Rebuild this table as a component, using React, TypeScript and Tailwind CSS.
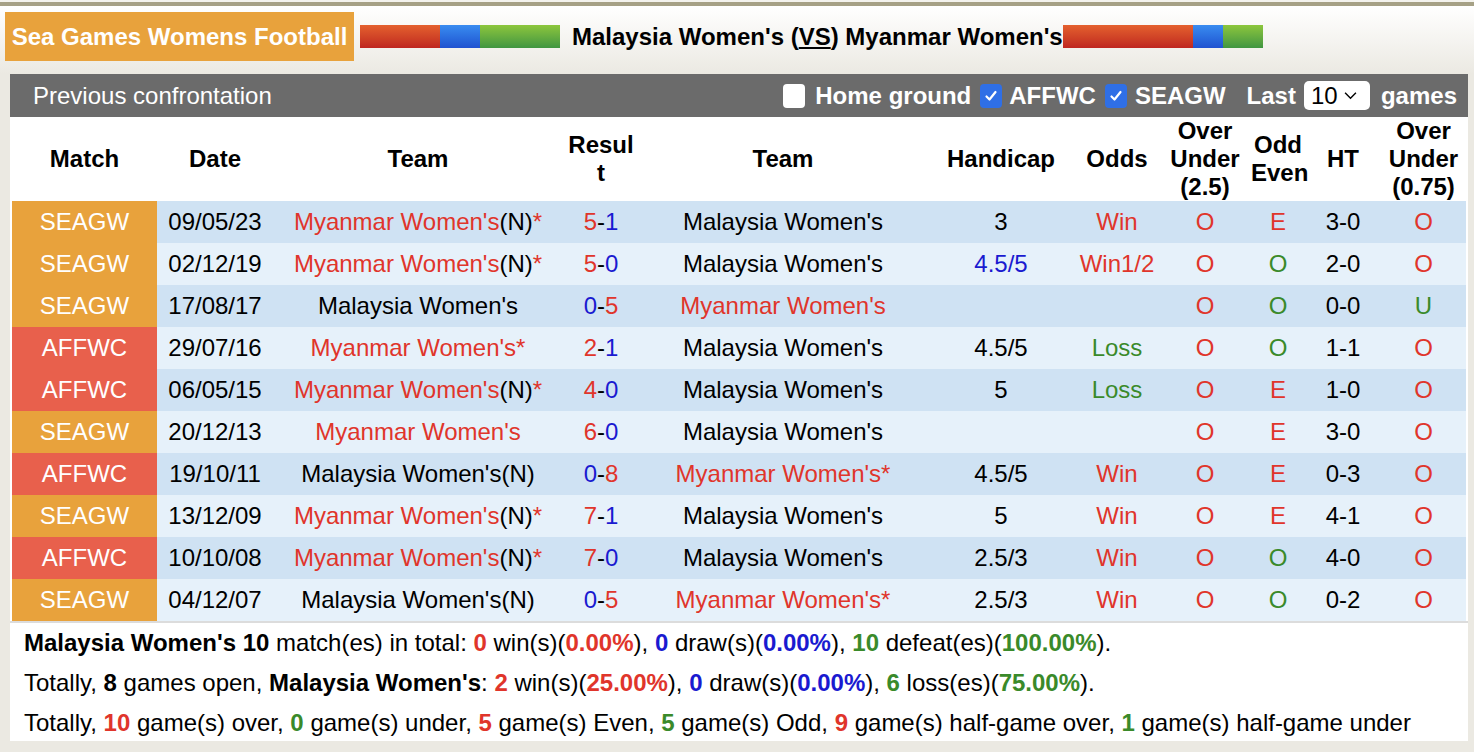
import React from 'react';

type Part = { t: string; c?: 'r' | 'b' | 'g' | 'k' };

type Row = {
  match: 'SEAGW' | 'AFFWC';
  date: string;
  home: Part[];
  score: [string, 'r' | 'b', string, 'r' | 'b'];
  away: Part[];
  hcap: string;
  hcapBlue?: boolean;
  odds: string;
  ou: string;
  oe: string;
  ht: string;
  ou2: string;
};

const MY_N: Part[] = [{ t: "Myanmar Women's", c: 'r' }, { t: '(N)', c: 'k' }, { t: '*', c: 'r' }];
const MY_STAR: Part[] = [{ t: "Myanmar Women's*", c: 'r' }];
const MY: Part[] = [{ t: "Myanmar Women's", c: 'r' }];
const MAL: Part[] = [{ t: "Malaysia Women's", c: 'k' }];
const MAL_N: Part[] = [{ t: "Malaysia Women's(N)", c: 'k' }];

const rows: Row[] = [
  { match: 'SEAGW', date: '09/05/23', home: MY_N, score: ['5', 'r', '1', 'b'], away: MAL, hcap: '3', odds: 'Win', ou: 'O', oe: 'E', ht: '3-0', ou2: 'O' },
  { match: 'SEAGW', date: '02/12/19', home: MY_N, score: ['5', 'r', '0', 'b'], away: MAL, hcap: '4.5/5', hcapBlue: true, odds: 'Win1/2', ou: 'O', oe: 'O', ht: '2-0', ou2: 'O' },
  { match: 'SEAGW', date: '17/08/17', home: MAL, score: ['0', 'b', '5', 'r'], away: MY, hcap: '', odds: '', ou: 'O', oe: 'O', ht: '0-0', ou2: 'U' },
  { match: 'AFFWC', date: '29/07/16', home: MY_STAR, score: ['2', 'r', '1', 'b'], away: MAL, hcap: '4.5/5', odds: 'Loss', ou: 'O', oe: 'O', ht: '1-1', ou2: 'O' },
  { match: 'AFFWC', date: '06/05/15', home: MY_N, score: ['4', 'r', '0', 'b'], away: MAL, hcap: '5', odds: 'Loss', ou: 'O', oe: 'E', ht: '1-0', ou2: 'O' },
  { match: 'SEAGW', date: '20/12/13', home: MY, score: ['6', 'r', '0', 'b'], away: MAL, hcap: '', odds: '', ou: 'O', oe: 'E', ht: '3-0', ou2: 'O' },
  { match: 'AFFWC', date: '19/10/11', home: MAL_N, score: ['0', 'b', '8', 'r'], away: MY_STAR, hcap: '4.5/5', odds: 'Win', ou: 'O', oe: 'E', ht: '0-3', ou2: 'O' },
  { match: 'SEAGW', date: '13/12/09', home: MY_N, score: ['7', 'r', '1', 'b'], away: MAL, hcap: '5', odds: 'Win', ou: 'O', oe: 'E', ht: '4-1', ou2: 'O' },
  { match: 'AFFWC', date: '10/10/08', home: MY_N, score: ['7', 'r', '0', 'b'], away: MAL, hcap: '2.5/3', odds: 'Win', ou: 'O', oe: 'O', ht: '4-0', ou2: 'O' },
  { match: 'SEAGW', date: '04/12/07', home: MAL_N, score: ['0', 'b', '5', 'r'], away: MY_STAR, hcap: '2.5/3', odds: 'Win', ou: 'O', oe: 'O', ht: '0-2', ou2: 'O' },
];

const color = (c?: string) =>
  c === 'r' ? 'text-[#e0352b]' : c === 'b' ? 'text-[#1a1ad0]' : c === 'g' ? 'text-[#3a8a2a]' : 'text-black';

const Team = ({ parts }: { parts: Part[] }) => (
  <>
    {parts.map((p, i) => (
      <span key={i} className={color(p.c)}>{p.t}</span>
    ))}
  </>
);

const Checked = () => (
  <div className="flex flex-none items-center justify-center w-[22px] h-[24px] rounded-[4px] bg-[#2f6fe6]">
    <svg viewBox="0 0 16 16" width="16" height="16">
      <path d="M3.5 8.5 L6.5 11.5 L12.5 4" fill="none" stroke="white" strokeWidth="2.2" strokeLinecap="round" strokeLinejoin="round" />
    </svg>
  </div>
);

const Bar = ({ r, b, g }: { r: number; b: number; g: number }) => (
  <div className="flex h-[23px] shrink-0">
    <div className="bg-gradient-to-b from-[#e4602e] to-[#bf2520]" style={{ width: r }} />
    <div className="bg-gradient-to-b from-[#3a8cf0] to-[#2152d0]" style={{ width: b }} />
    <div className="bg-gradient-to-b from-[#8cc63c] to-[#3f9640]" style={{ width: g }} />
  </div>
);

const B = ({ c, children }: { c?: string; children: React.ReactNode }) => (
  <b className={`font-bold ${color(c)}`}>{children}</b>
);

export default function App() {
  return (
    <div className="w-[1474px] h-[752px] bg-[#ebe9e2] font-['Liberation_Sans',Arial,sans-serif] text-[24px] text-black overflow-hidden">
      <div className="h-[2px] bg-[#f4f3ee]" />
      <div className="h-[4px] bg-[#a6a186]" />
      {/* Header */}
      <div className="h-[68px] bg-gradient-to-b from-white to-[#ebe9e2] flex items-start pt-[6px] pl-[5px]">
        <div className="h-[49px] w-[349px] shrink-0 bg-[#e8a23c] text-white font-bold flex items-center justify-center">
          Sea Games Womens Football
        </div>
        <div className="ml-[6px] mt-[13px] flex items-center">
          <Bar r={80} b={40} g={80} />
          <div className="ml-[12px] font-bold leading-[23px] whitespace-nowrap">
            Malaysia Women's (<span className="underline">VS</span>) Myanmar Women's
          </div>
          <Bar r={130} b={30} g={40} />
        </div>
      </div>

      {/* Panel */}
      <div className="ml-[10px] w-[1458px]">
        <div className="h-[43px] bg-[#6b6b6b] text-white flex items-center pl-[23px] pr-[11px] whitespace-nowrap">
          <div>Previous confrontation</div>
          <div className="ml-auto flex items-center font-bold">
            <div className="flex-none w-[22px] h-[24px] rounded-[4px] bg-white mr-[10px]" />
            <span>Home ground</span>
            <div className="ml-[9px] mr-[7px]"><Checked /></div>
            <span>AFFWC</span>
            <div className="ml-[9px] mr-[8px]"><Checked /></div>
            <span>SEAGW</span>
            <span className="ml-[21px]">Last</span>
            <div className="ml-[8px] mr-[11px] flex-none w-[66px] h-[29px] rounded-[5px] bg-white text-black font-normal flex items-center pl-[7px]">
              10
              <svg viewBox="0 0 12 8" width="13" height="9" className="ml-[6px]">
                <path d="M1 1.5 L6 6.5 L11 1.5" fill="none" stroke="black" strokeWidth="1.3" />
              </svg>
            </div>
            <span>games</span>
          </div>
        </div>

        <div className="bg-white pl-[2px] pr-[2px]">
          <table className="table-fixed border-collapse w-[1454px] text-center">
            <colgroup>
              <col className="w-[145px]" />
              <col className="w-[116px]" />
              <col className="w-[290px]" />
              <col className="w-[76px]" />
              <col className="w-[288px]" />
              <col className="w-[148px]" />
              <col className="w-[84px]" />
              <col className="w-[92px]" />
              <col className="w-[54px]" />
              <col className="w-[76px]" />
              <col className="w-[85px]" />
            </colgroup>
            <thead>
              <tr className="h-[83px] font-bold leading-[28px]">
                <th>Match</th>
                <th>Date</th>
                <th>Team</th>
                <th>Resul<br />t</th>
                <th>Team</th>
                <th>Handicap</th>
                <th>Odds</th>
                <th>Over<br />Under<br />(2.5)</th>
                <th>Odd<br />Even</th>
                <th>HT</th>
                <th>Over<br />Under<br />(0.75)</th>
              </tr>
            </thead>
            <tbody>
              {rows.map((r, i) => (
                <tr key={i} className={`h-[42px] leading-[28px] ${i % 2 === 0 ? 'bg-[#cfe2f3]' : 'bg-[#e6f1fa]'}`}>
                  <td className={`text-white ${r.match === 'SEAGW' ? 'bg-[#e8a23c]' : 'bg-[#e8604c]'}`}>{r.match}</td>
                  <td>{r.date}</td>
                  <td className="whitespace-nowrap"><Team parts={r.home} /></td>
                  <td className="whitespace-nowrap">
                    <span className={color(r.score[1])}>{r.score[0]}</span>-
                    <span className={color(r.score[3])}>{r.score[2]}</span>
                  </td>
                  <td className="whitespace-nowrap"><Team parts={r.away} /></td>
                  <td className={r.hcapBlue ? 'text-[#1a1ad0]' : ''}>{r.hcap}</td>
                  <td className={r.odds === 'Loss' ? 'text-[#3a8a2a]' : 'text-[#e0352b]'}>{r.odds}</td>
                  <td className="text-[#e0352b]">{r.ou}</td>
                  <td className={r.oe === 'E' ? 'text-[#e0352b]' : 'text-[#3a8a2a]'}>{r.oe}</td>
                  <td>{r.ht}</td>
                  <td className={r.ou2 === 'U' ? 'text-[#3a8a2a]' : 'text-[#e0352b]'}>{r.ou2}</td>
                </tr>
              ))}
            </tbody>
          </table>
        </div>

        {/* Summary */}
        <div className="bg-white border-t-2 border-[#dcdcdc] h-[120px] pl-[14px] leading-[40px] whitespace-nowrap">
          <div>
            <B>Malaysia Women's 10</B> match(es) in total: <B c="r">0</B> win(s)(<B c="r">0.00%</B>), <B c="b">0</B> draw(s)(<B c="b">0.00%</B>), <B c="g">10</B> defeat(es)(<B c="g">100.00%</B>).
          </div>
          <div>
            Totally, <B>8</B> games open, <B>Malaysia Women's</B>: <B c="r">2</B> win(s)(<B c="r">25.00%</B>), <B c="b">0</B> draw(s)(<B c="b">0.00%</B>), <B c="g">6</B> loss(es)(<B c="g">75.00%</B>).
          </div>
          <div>
            Totally, <B c="r">10</B> game(s) over, <B c="g">0</B> game(s) under, <B c="r">5</B> game(s) Even, <B c="g">5</B> game(s) Odd, <B c="r">9</B> game(s) half-game over, <B c="g">1</B> game(s) half-game under
          </div>
        </div>
      </div>
    </div>
  );
}
